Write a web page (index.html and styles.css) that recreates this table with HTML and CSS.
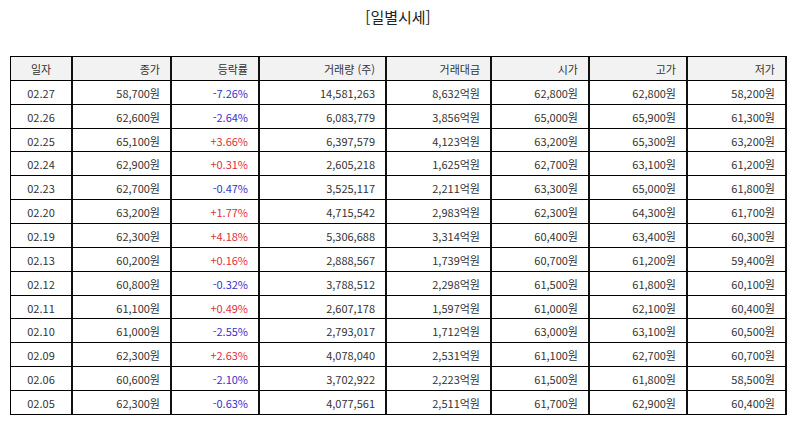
FILE: index.html
```html
<!DOCTYPE html>
<html lang="ko">
<head>
<meta charset="utf-8">
<link rel="stylesheet" href="styles.css">
</head>
<body>
<div class="page">
  <h1 class="title">[일별시세]</h1>
  <table class="price-table">
    <colgroup>
      <col class="c-date"><col class="c-close"><col class="c-rate"><col class="c-vol">
      <col class="c-amt"><col class="c-open"><col class="c-high"><col class="c-low">
    </colgroup>
    <thead>
      <tr>
        <th class="center">일자</th><th>종가</th><th>등락률</th><th>거래량 (주)</th>
        <th>거래대금</th><th>시가</th><th>고가</th><th>저가</th>
      </tr>
    </thead>
    <tbody>
      <tr><td class="center">02.27</td><td>58,700원</td><td class="down">-7.26%</td><td>14,581,263</td><td>8,632억원</td><td>62,800원</td><td>62,800원</td><td>58,200원</td></tr>
      <tr><td class="center">02.26</td><td>62,600원</td><td class="down">-2.64%</td><td>6,083,779</td><td>3,856억원</td><td>65,000원</td><td>65,900원</td><td>61,300원</td></tr>
      <tr><td class="center">02.25</td><td>65,100원</td><td class="up">+3.66%</td><td>6,397,579</td><td>4,123억원</td><td>63,200원</td><td>65,300원</td><td>63,200원</td></tr>
      <tr><td class="center">02.24</td><td>62,900원</td><td class="up">+0.31%</td><td>2,605,218</td><td>1,625억원</td><td>62,700원</td><td>63,100원</td><td>61,200원</td></tr>
      <tr><td class="center">02.23</td><td>62,700원</td><td class="down">-0.47%</td><td>3,525,117</td><td>2,211억원</td><td>63,300원</td><td>65,000원</td><td>61,800원</td></tr>
      <tr><td class="center">02.20</td><td>63,200원</td><td class="up">+1.77%</td><td>4,715,542</td><td>2,983억원</td><td>62,300원</td><td>64,300원</td><td>61,700원</td></tr>
      <tr><td class="center">02.19</td><td>62,300원</td><td class="up">+4.18%</td><td>5,306,688</td><td>3,314억원</td><td>60,400원</td><td>63,400원</td><td>60,300원</td></tr>
      <tr><td class="center">02.13</td><td>60,200원</td><td class="up">+0.16%</td><td>2,888,567</td><td>1,739억원</td><td>60,700원</td><td>61,200원</td><td>59,400원</td></tr>
      <tr><td class="center">02.12</td><td>60,800원</td><td class="down">-0.32%</td><td>3,788,512</td><td>2,298억원</td><td>61,500원</td><td>61,800원</td><td>60,100원</td></tr>
      <tr><td class="center">02.11</td><td>61,100원</td><td class="up">+0.49%</td><td>2,607,178</td><td>1,597억원</td><td>61,000원</td><td>62,100원</td><td>60,400원</td></tr>
      <tr><td class="center">02.10</td><td>61,000원</td><td class="down">-2.55%</td><td>2,793,017</td><td>1,712억원</td><td>63,000원</td><td>63,100원</td><td>60,500원</td></tr>
      <tr><td class="center">02.09</td><td>62,300원</td><td class="up">+2.63%</td><td>4,078,040</td><td>2,531억원</td><td>61,100원</td><td>62,700원</td><td>60,700원</td></tr>
      <tr><td class="center">02.06</td><td>60,600원</td><td class="down">-2.10%</td><td>3,702,922</td><td>2,223억원</td><td>61,500원</td><td>61,800원</td><td>58,500원</td></tr>
      <tr><td class="center">02.05</td><td>62,300원</td><td class="down">-0.63%</td><td>4,077,561</td><td>2,511억원</td><td>61,700원</td><td>62,900원</td><td>60,400원</td></tr>
    </tbody>
  </table>
</div>
</body>
</html>
```
FILE: styles.css
```css
html, body {
  margin: 0;
  padding: 0;
  background: #fff;
}
.page {
  padding: 6px 8px 0 10px;
  font-family: "Noto Sans CJK KR", "Noto Sans", sans-serif;
  color: #333;
}
.title {
  margin: 0 0 28px 0;
  text-align: center;
  font-size: 15px;
  font-weight: normal;
  line-height: 22px;
  color: #222;
}
.price-table {
  width: 776px;
  border-collapse: separate;
  border-spacing: 0;
  table-layout: fixed;
  font-size: 11px;
  border-top: 1px solid #000;
  border-left: 1px solid #000;
}
.c-date { width: 62px; }
.c-close { width: 99px; }
.c-rate { width: 88px; }
.c-vol { width: 127px; }
.c-amt { width: 105px; }
.c-open { width: 98px; }
.c-high { width: 98px; }
.c-low { width: 99px; }
.price-table tr {
  height: 23.87px;
}
.price-table th,
.price-table td {
  border-right: 2px solid #111;
  border-bottom: 1px solid #000;
  padding: 1px 10px 0 4px;
  text-align: right;
  font-weight: normal;
  line-height: 14px;
  white-space: nowrap;
}
.price-table th {
  background: #f2f2f2;
  color: #333;
}
.price-table .center {
  text-align: center;
  padding: 1px 0 0 0;
}
.down { color: #3333cc; }
.up { color: #e0303a; }
```
